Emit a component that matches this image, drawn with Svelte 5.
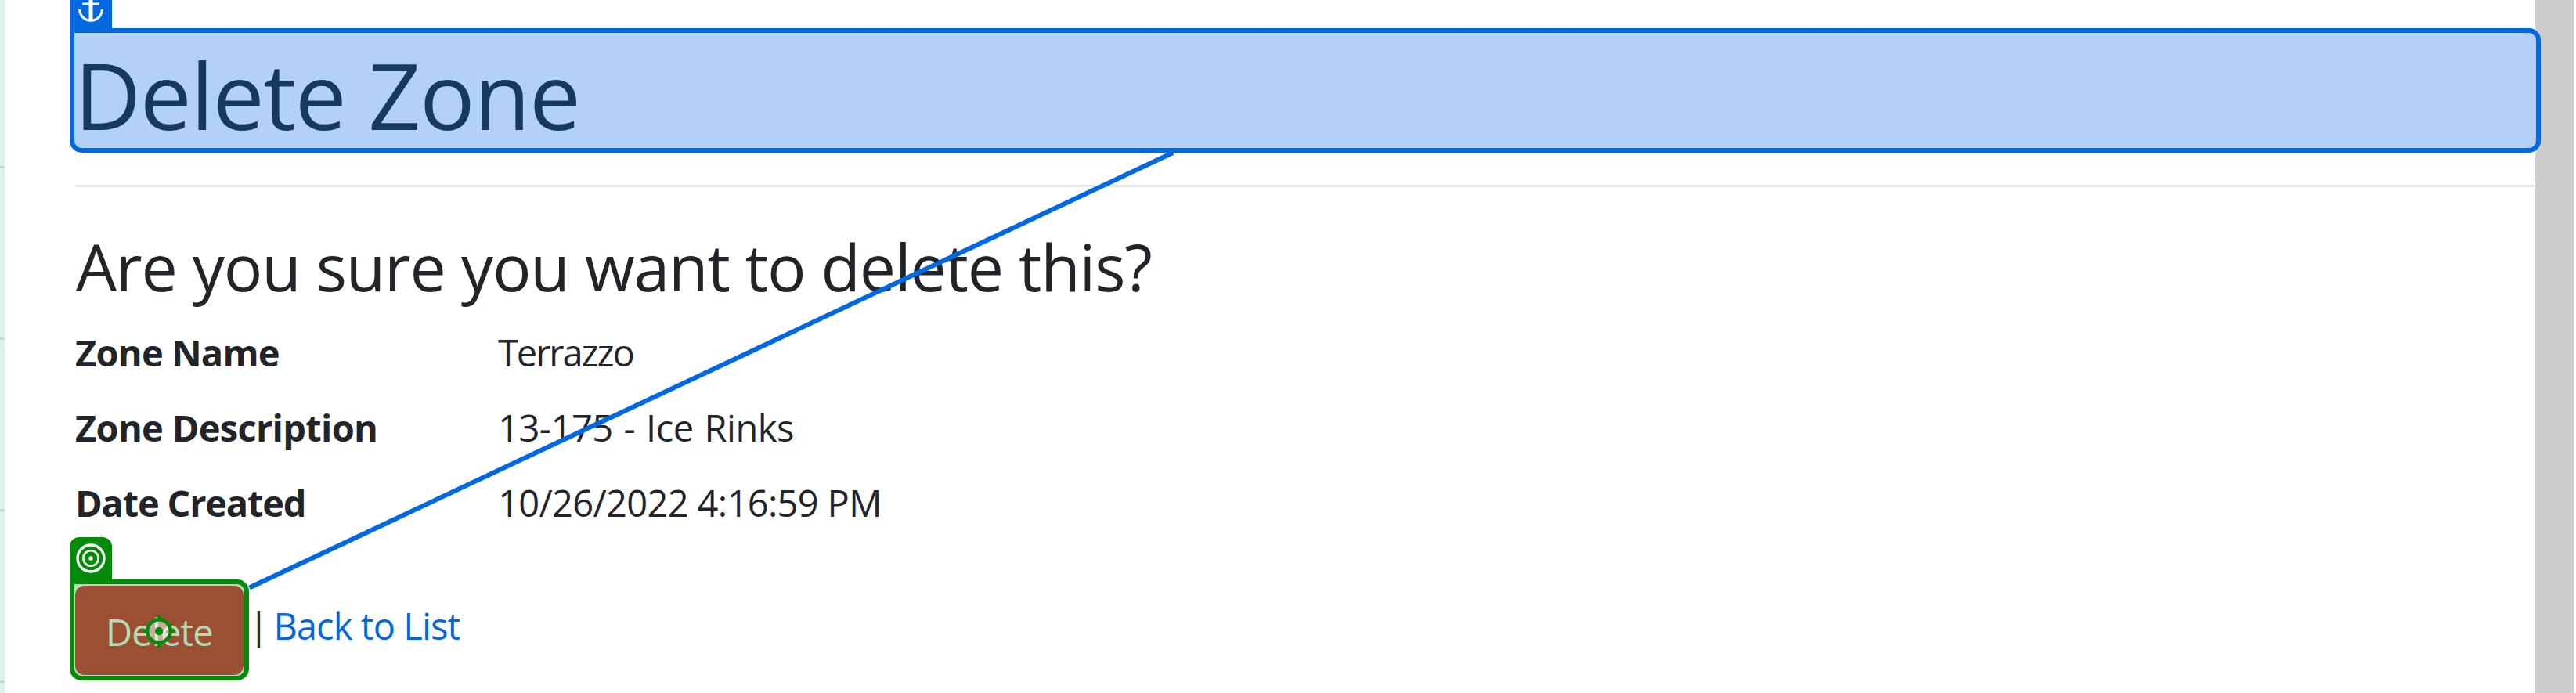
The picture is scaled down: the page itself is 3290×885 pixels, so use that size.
<script>
  const details = [
    { term: 'Zone Name', value: 'Terrazzo', termSpacing: -0.76, valueSpacing: -2.06, wordSpacing: 0 },
    { term: 'Zone Description', value: '13-175 - Ice Rinks', termSpacing: -0.7, valueSpacing: -0.45, wordSpacing: 2 },
    { term: 'Date Created', value: '10/26/2022 4:16:59 PM', termSpacing: -1.22, valueSpacing: -0.65, wordSpacing: 0 }
  ];
</script>

<div class="page">
  <aside class="rail"></aside>

  <main>
    <div class="tab anchor">
      <svg width="54" height="36" viewBox="0 0 54 36" fill="none" stroke="#fff">
        <path d="M27 0V26" stroke-width="5" />
        <path d="M16.2 5H38" stroke-width="3" />
        <path d="M12.7 12a14.3 14.3 0 0 0 28.6 0" stroke-width="3" />
      </svg>
    </div>
    <h1>Delete Zone</h1>
    <hr />
    <h3>Are you sure you want to delete this?</h3>

    <dl>
      {#each details as d}
        <dt style="letter-spacing: {d.termSpacing}px">{d.term}</dt>
        <dd style="letter-spacing: {d.valueSpacing}px; word-spacing: {d.wordSpacing}px">{d.value}</dd>
      {/each}
    </dl>

    <form class="actions" onsubmit={(e) => e.preventDefault()}>
      <div class="target">
        <div class="tab goal">
          <svg width="54" height="54" viewBox="0 0 54 54" fill="none" stroke="#fff">
            <circle cx="27" cy="27" r="17" stroke-width="3.3" />
            <circle cx="27" cy="27" r="9.7" stroke-width="2.6" />
            <circle cx="27" cy="27" r="2.7" fill="#fff" stroke="none" />
          </svg>
        </div>
        <div class="frame">
          <button type="submit">Delete</button>
          <svg class="crosshair" width="42" height="42" viewBox="0 0 42 42">
            <circle cx="21" cy="21" r="14.7" fill="#fff" fill-opacity=".5" stroke="#058b0a" stroke-width="4.4" />
            <path d="M21 0V6M21 36V42M0 21H6M36 21H42" stroke="#058b0a" stroke-width="4" />
            <circle cx="21" cy="21" r="5.2" fill="#058b0a" />
          </svg>
        </div>
      </div>
      <span class="divider">|</span>
      <a href="#list">Back to List</a>
    </form>
  </main>

  <div class="gutter"></div>

  <svg class="connector" width="3290" height="885" viewBox="0 0 3290 885">
    <path d="M318.5 750.5L1498 195" stroke="#0068e0" stroke-width="6" />
  </svg>
</div>

<style>
  :global(body) {
    margin: 0;
    background: #fff;
  }

  .page {
    position: relative;
    display: flex;
    width: 3290px;
    height: 885px;
    box-sizing: border-box;
    padding-right: 3px;
    overflow: hidden;
    background: #fff;
    color: #212529;
    font: 400 47px/96px 'Open Sans', 'Noto Sans', sans-serif;
  }

  .rail {
    flex: 0 0 6px;
    background: repeating-linear-gradient(#def2f0 0 212px, #c5d9d7 212px 215px, #def2f0 215px 219px);
  }

  .gutter {
    flex: 0 0 49px;
    background: #cdcdcd;
  }

  main {
    flex: 1;
    min-width: 0;
    padding-left: 83px;
    z-index: 1;
  }

  .tab {
    width: 54px;
  }

  .tab svg {
    display: block;
  }

  .anchor {
    height: 36px;
    background: #0068e0;
  }

  h1 {
    box-sizing: border-box;
    height: 159px;
    margin: 0 -7px 0 0;
    padding: 10px 0 0;
    border: 6px solid #0068e0;
    border-radius: 0 15px 15px 15px;
    background: #b3d1f6;
    color: #17395f;
    font-size: 117.6px;
    font-weight: 400;
    line-height: 137px;
    letter-spacing: -1.47px;
  }

  hr {
    height: 3px;
    margin: 41px 0 51px 7px;
    border: 0;
    background: #e4e4e4;
  }

  h3 {
    margin: 0 0 12px 8px;
    font-size: 82.4px;
    font-weight: 400;
    line-height: 100px;
    letter-spacing: -1.19px;
  }

  dl {
    display: grid;
    grid-template-columns: 540px 1fr;
    grid-auto-rows: 96px;
    margin: 0 0 0 7px;
  }

  dt {
    font-weight: 700;
  }

  dd {
    margin: 0;
  }

  .actions {
    display: flex;
    align-items: flex-start;
    margin-top: -4px;
  }

  .target {
    flex: 0 0 229px;
  }

  .goal {
    height: 54px;
    border-radius: 12px 12px 0 0;
    background: #058b0a;
  }

  .frame {
    position: relative;
    box-sizing: border-box;
    height: 129px;
    padding: 2px 1px 1px;
    border: 6px solid #058b0a;
    border-radius: 0 15px 15px 15px;
    background: #b3dbb5;
  }

  button {
    display: block;
    width: 100%;
    height: 114px;
    padding: 4px 0 0;
    border: 0;
    border-radius: 12px;
    background: #9b4f33;
    color: #b3dbb5;
    font: inherit;
    line-height: 110px;
    letter-spacing: -0.84px;
  }

  .crosshair {
    position: absolute;
    left: 87px;
    top: 39px;
  }

  .divider,
  .actions a {
    padding-top: 65px;
  }

  .divider {
    width: 32px;
    margin-left: -0.6px;
  }

  .actions a {
    color: #0067dc;
    text-decoration: none;
    letter-spacing: -0.9px;
  }

  .connector {
    position: absolute;
    inset: 0;
    z-index: 2;
    pointer-events: none;
  }
</style>
